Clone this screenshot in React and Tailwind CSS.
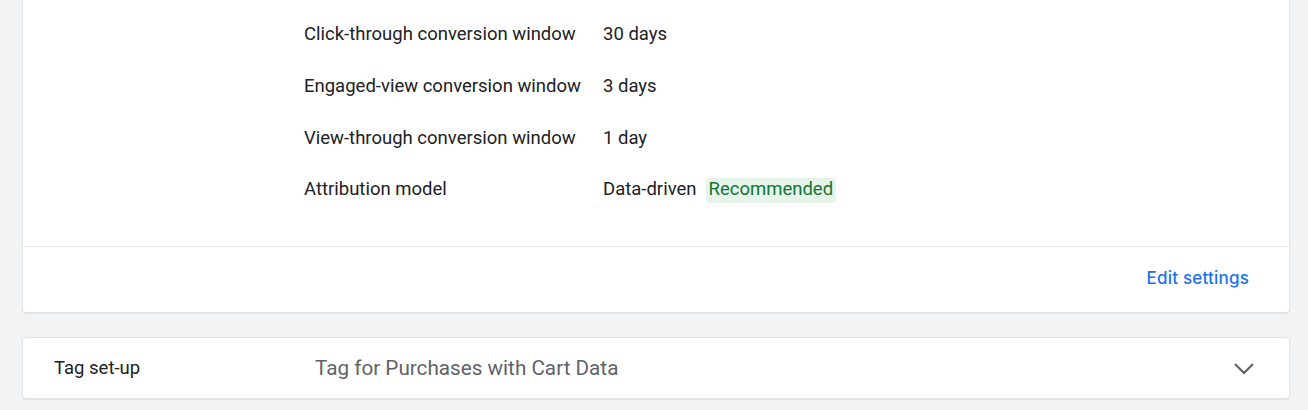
export default function App() {
  const rows = [
    ["Click-through conversion window", "30 days"],
    ["Engaged-view conversion window", "3 days"],
    ["View-through conversion window", "1 day"],
    ["Attribution model", "Data-driven"],
  ];
  return (
    <div
      className="w-[1308px] h-[410px] bg-[#f1f3f4] pl-[22px] pr-[18px] overflow-hidden"
      style={{ fontFamily: "Roboto, 'Liberation Sans', sans-serif" }}
    >
      <div className="bg-white border border-t-0 border-[#e3e4e6] rounded-b-[4px] shadow-[0_1px_1px_rgba(60,64,67,0.08)]">
        <div className="pt-[9.5px] pb-[30.5px] pl-[281px]">
          {rows.map(([l, v], i) => (
            <div key={i} className="flex items-center h-[51.6px] text-[18.5px] text-[#202124]">
              <div className="w-[299px]">{l}</div>
              <div className="flex items-center">
                <span>{v}</span>
                {i === 3 && (
                  <span className="ml-[9px] bg-[#e6f4ea] text-[#137333] rounded-[4px] px-[3px] h-[25px] flex items-center">
                    Recommended
                  </span>
                )}
              </div>
            </div>
          ))}
        </div>
        <div className="border-t border-[#e8eaed] h-[66px] flex items-center justify-end pr-[40px]">
          <span
            className="text-[#1a73e8] text-[17px] font-medium tracking-[0.2px] pb-[2px]"
            style={{ fontFamily: "Inter, 'Open Sans', sans-serif" }}
          >
            Edit settings
          </span>
        </div>
      </div>
      <div className="mt-[24px] bg-white border border-[#e3e4e6] rounded-[4px] h-[62px] flex items-center shadow-[0_1px_1px_rgba(60,64,67,0.08)]">
        <div className="w-[292px] pl-[31px] text-[18.5px] text-[#202124]">Tag set-up</div>
        <div className="flex-1 text-[20.7px] text-[#5f6368] pt-[1px]">Tag for Purchases with Cart Data</div>
        <svg width="24" height="24" viewBox="0 0 24 24" className="mr-[33px]" fill="none">
          <path d="M3 8 L12 17 L21 8" stroke="#5f6368" strokeWidth="2.2" />
        </svg>
      </div>
    </div>
  );
}
